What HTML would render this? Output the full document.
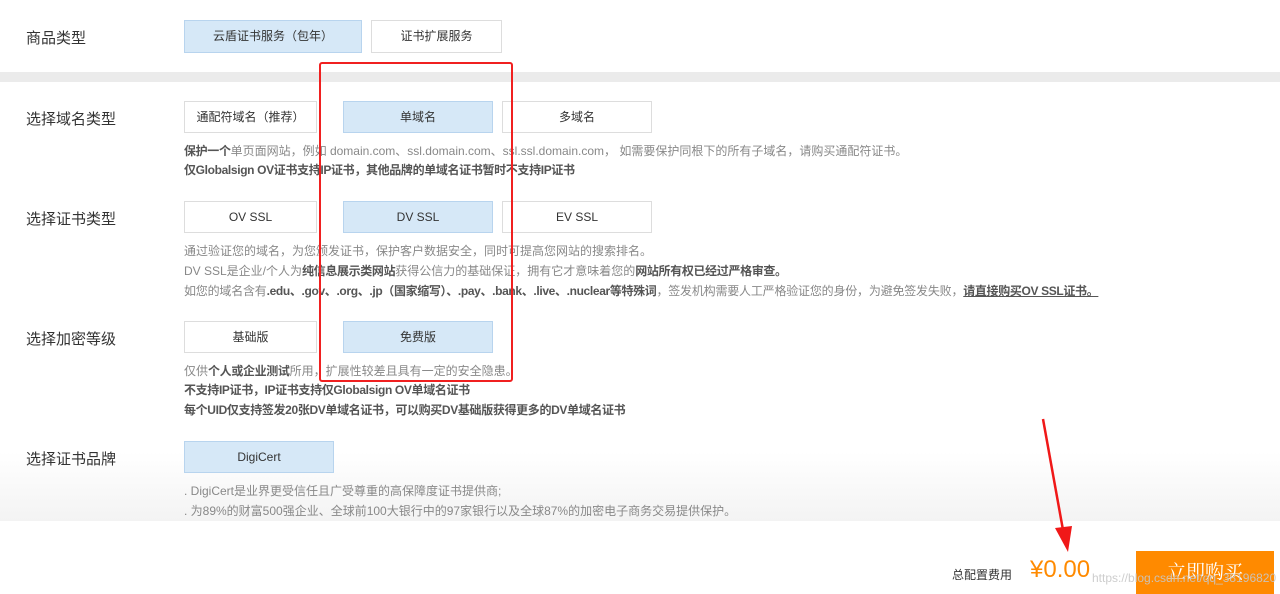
<!DOCTYPE html>
<html><head><meta charset="utf-8"><style>
body{margin:0;width:1280px;height:594px;position:relative;overflow:hidden;background:#fff;font-family:"Liberation Sans","Noto Sans CJK SC",sans-serif;color:#333}
.a{position:absolute}
.bg{position:absolute;left:0;top:82px;width:1280px;height:439px;background:linear-gradient(#fff 0,#fff 370px,#f3f3f3 439px)}
.bar{position:absolute;left:0;top:72px;width:1280px;height:10px;background:#ebebeb}
.lab{position:absolute;left:26px;font-size:15px;color:#333;line-height:18px}
.btn{position:absolute;box-sizing:border-box;border:1px solid #ddd;background:#fff;font-size:12px;text-align:center;color:#333}
.on{background:#d6e8f7;border-color:#b8d4ee}
.t{position:absolute;left:184px;font-size:12px;color:#888;white-space:nowrap;line-height:16px}
b{color:#555;letter-spacing:-0.35px}
</style></head><body>
<div class="bg"></div><div class="bar"></div>
<div class="lab" style="top:30px">商品类型</div>
<div class="btn on" style="left:184px;top:20px;width:178px;height:33px;line-height:31px">云盾证书服务（包年）</div>
<div class="btn" style="left:371px;top:20px;width:131px;height:33px;line-height:31px">证书扩展服务</div>

<div class="lab" style="top:111px">选择域名类型</div>
<div class="btn" style="left:184px;top:101px;width:133px;height:32px;line-height:30px">通配符域名（推荐）</div>
<div class="btn on" style="left:343px;top:101px;width:150px;height:32px;line-height:30px">单域名</div>
<div class="btn" style="left:502px;top:101px;width:150px;height:32px;line-height:30px">多域名</div>
<div class="t" style="top:143px"><b>保护一个</b>单页面网站，例如 domain.com、ssl.domain.com、ssl.ssl.domain.com， 如需要保护同根下的所有子域名，请购买通配符证书。</div>
<div class="t" style="top:162px"><b>仅Globalsign OV证书支持IP证书，其他品牌的单域名证书暂时不支持IP证书</b></div>

<div class="lab" style="top:211px">选择证书类型</div>
<div class="btn" style="left:184px;top:201px;width:133px;height:32px;line-height:30px">OV SSL</div>
<div class="btn on" style="left:343px;top:201px;width:150px;height:32px;line-height:30px">DV SSL</div>
<div class="btn" style="left:502px;top:201px;width:150px;height:32px;line-height:30px">EV SSL</div>
<div class="t" style="top:243px">通过验证您的域名，为您颁发证书，保护客户数据安全，同时可提高您网站的搜索排名。</div>
<div class="t" style="top:263px">DV SSL是企业/个人为<b>纯信息展示类网站</b>获得公信力的基础保证，拥有它才意味着您的<b>网站所有权已经过严格审查。</b></div>
<div class="t" style="top:283px;letter-spacing:-0.2px">如您的域名含有<b>.edu、.gov、.org、.jp（国家缩写）、.pay、.bank、.live、.nuclear等特殊词</b>，签发机构需要人工严格验证您的身份，为避免签发失败，<b style="text-decoration:underline">请直接购买OV SSL证书。</b></div>

<div class="lab" style="top:331px">选择加密等级</div>
<div class="btn" style="left:184px;top:321px;width:133px;height:32px;line-height:30px">基础版</div>
<div class="btn on" style="left:343px;top:321px;width:150px;height:32px;line-height:30px">免费版</div>
<div class="t" style="top:363px">仅供<b>个人或企业测试</b>所用，扩展性较差且具有一定的安全隐患。</div>
<div class="t" style="top:382px"><b>不支持IP证书，IP证书支持仅Globalsign OV单域名证书</b></div>
<div class="t" style="top:402px"><b>每个UID仅支持签发20张DV单域名证书，可以购买DV基础版获得更多的DV单域名证书</b></div>

<div class="lab" style="top:451px">选择证书品牌</div>
<div class="btn on" style="left:184px;top:441px;width:150px;height:32px;line-height:30px">DigiCert</div>
<div class="t" style="top:483px">. DigiCert是业界更受信任且广受尊重的高保障度证书提供商;</div>
<div class="t" style="top:503px">. 为89%的财富500强企业、全球前100大银行中的97家银行以及全球87%的加密电子商务交易提供保护。</div>

<div class="a" style="left:952px;top:566px;font-size:12px;color:#333">总配置费用</div>
<div class="a" style="left:1030px;top:556px;font-size:24px;color:#ff8a00;line-height:28px">¥0.00</div>
<div class="a" style="left:1136px;top:551px;width:138px;height:43px;background:#ff8a00;color:#fff;font-size:19px;line-height:43px;text-align:center;font-family:'Liberation Serif','Noto Serif CJK SC',serif">立即购买</div>
<div class="a" style="left:1092px;top:571px;font-size:12px;color:rgba(200,200,200,.9)">https://blog.csdn.net/qq_38196820</div>

<div class="a" style="left:319px;top:62px;width:190px;height:316px;border:2.5px solid #f02020;border-radius:3px"></div>
<svg class="a" style="left:0;top:0" width="1280" height="594"><line x1="1043" y1="419" x2="1063" y2="530" stroke="#f01818" stroke-width="2.5"/><polygon points="1055,528 1072,526 1068,552" fill="#f01818"/></svg>
</body></html>
